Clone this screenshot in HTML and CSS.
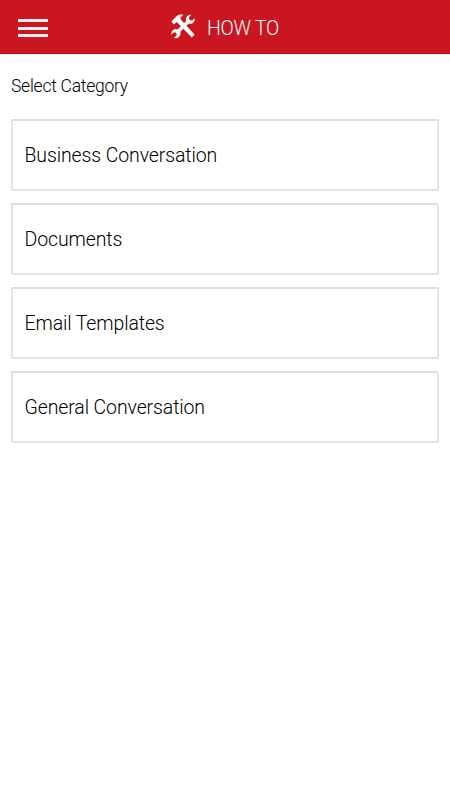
FILE: index.html
```
<!DOCTYPE html>
<html lang="en">
<head>
    <meta charset="UTF-8">
    <meta name="viewport" content="width=device-width, initial-scale=1.0">
    <title>How To</title>
    <link rel="stylesheet" href="styles.css">
</head>
<body>
    <header class="header">
        <button class="menu-btn" aria-label="Menu">
            <span></span>
            <span></span>
            <span></span>
        </button>
        <div class="title">
            <svg class="tools" viewBox="0 0 24 25" width="24" height="25">
                <!-- hammer -->
                <path d="M0.4 7.4 L6.4 1.4 Q8.4 0.1 11.8 0.6 L11.6 1.9 Q9.4 2.4 9.3 4 L10.4 6.2 L23.6 20.6 L20.8 23.6 L7.2 9.4 L5.4 8 L3 10.4 Z"/>
                <!-- wrench -->
                <path d="M20.2 0.8 L17.8 3.6 L18.6 6 L21 6.6 L23.7 4.2 Q24 8.2 21.2 9.4 Q19.4 10 17.8 9.4 L9.3 17.8 Q9.9 20 8.6 22.2 Q6.6 24.8 2.8 24 L5.8 21.2 L5.2 18.8 L2.9 18.2 L0.3 20.8 Q-0.2 16.8 2.8 15.4 Q4.6 14.6 6.6 15.4 L15.2 7 Q14.2 4.4 16 2.3 Q17.6 0.4 20.2 0.8 Z"/>
            </svg>
            <h1>HOW TO</h1>
        </div>
    </header>

    <main class="content">
        <p class="label">Select Category</p>
        <ul class="categories">
            <li>Business Conversation</li>
            <li>Documents</li>
            <li>Email Templates</li>
            <li>General Conversation</li>
        </ul>
    </main>
</body>
</html>
```
FILE: styles.css
```
body {
    margin: 0;
    background-color: #fff;
    color: #000;
    font-family: Roboto, sans-serif;
    font-weight: 300;
}

.header {
    box-sizing: border-box;
    display: grid;
    grid-template-columns: 66px 1fr 66px;
    align-items: center;
    height: 54px;
    border-bottom: 1px solid #c4040f;
    background-color: #c91621;
    color: #fff;
}

.menu-btn {
    display: flex;
    flex-direction: column;
    justify-content: space-between;
    width: 30px;
    height: 18px;
    margin: 3px 0 0 18px;
    padding: 0;
    border: none;
    background: none;
    cursor: pointer;
}

.menu-btn span {
    width: 100%;
    height: 3px;
    background-color: #fdf0f0;
}

.title {
    display: flex;
    align-items: center;
    justify-content: center;
    gap: 12px;
}

.title h1 {
    margin: 5px 0 0;
    font-size: 19.5px;
    line-height: 24px;
    font-weight: 300;
    letter-spacing: -0.2px;
}

.tools {
    fill: #fff;
}

.content {
    padding: 21px 11px;
}

.label {
    margin: 0 0 22px;
    font-size: 17.5px;
    line-height: 22px;
    letter-spacing: -0.25px;
}

.categories {
    display: flex;
    flex-direction: column;
    gap: 12px;
    margin: 0;
    padding: 0;
    list-style: none;
}

.categories li {
    box-sizing: border-box;
    height: 72px;
    padding: 0 11.5px;
    border: 2px solid #e5e5e5;
    border-top-color: #dedede;
    font-size: 19.5px;
    line-height: 69px;
    letter-spacing: -0.12px;
    cursor: pointer;
}
```
